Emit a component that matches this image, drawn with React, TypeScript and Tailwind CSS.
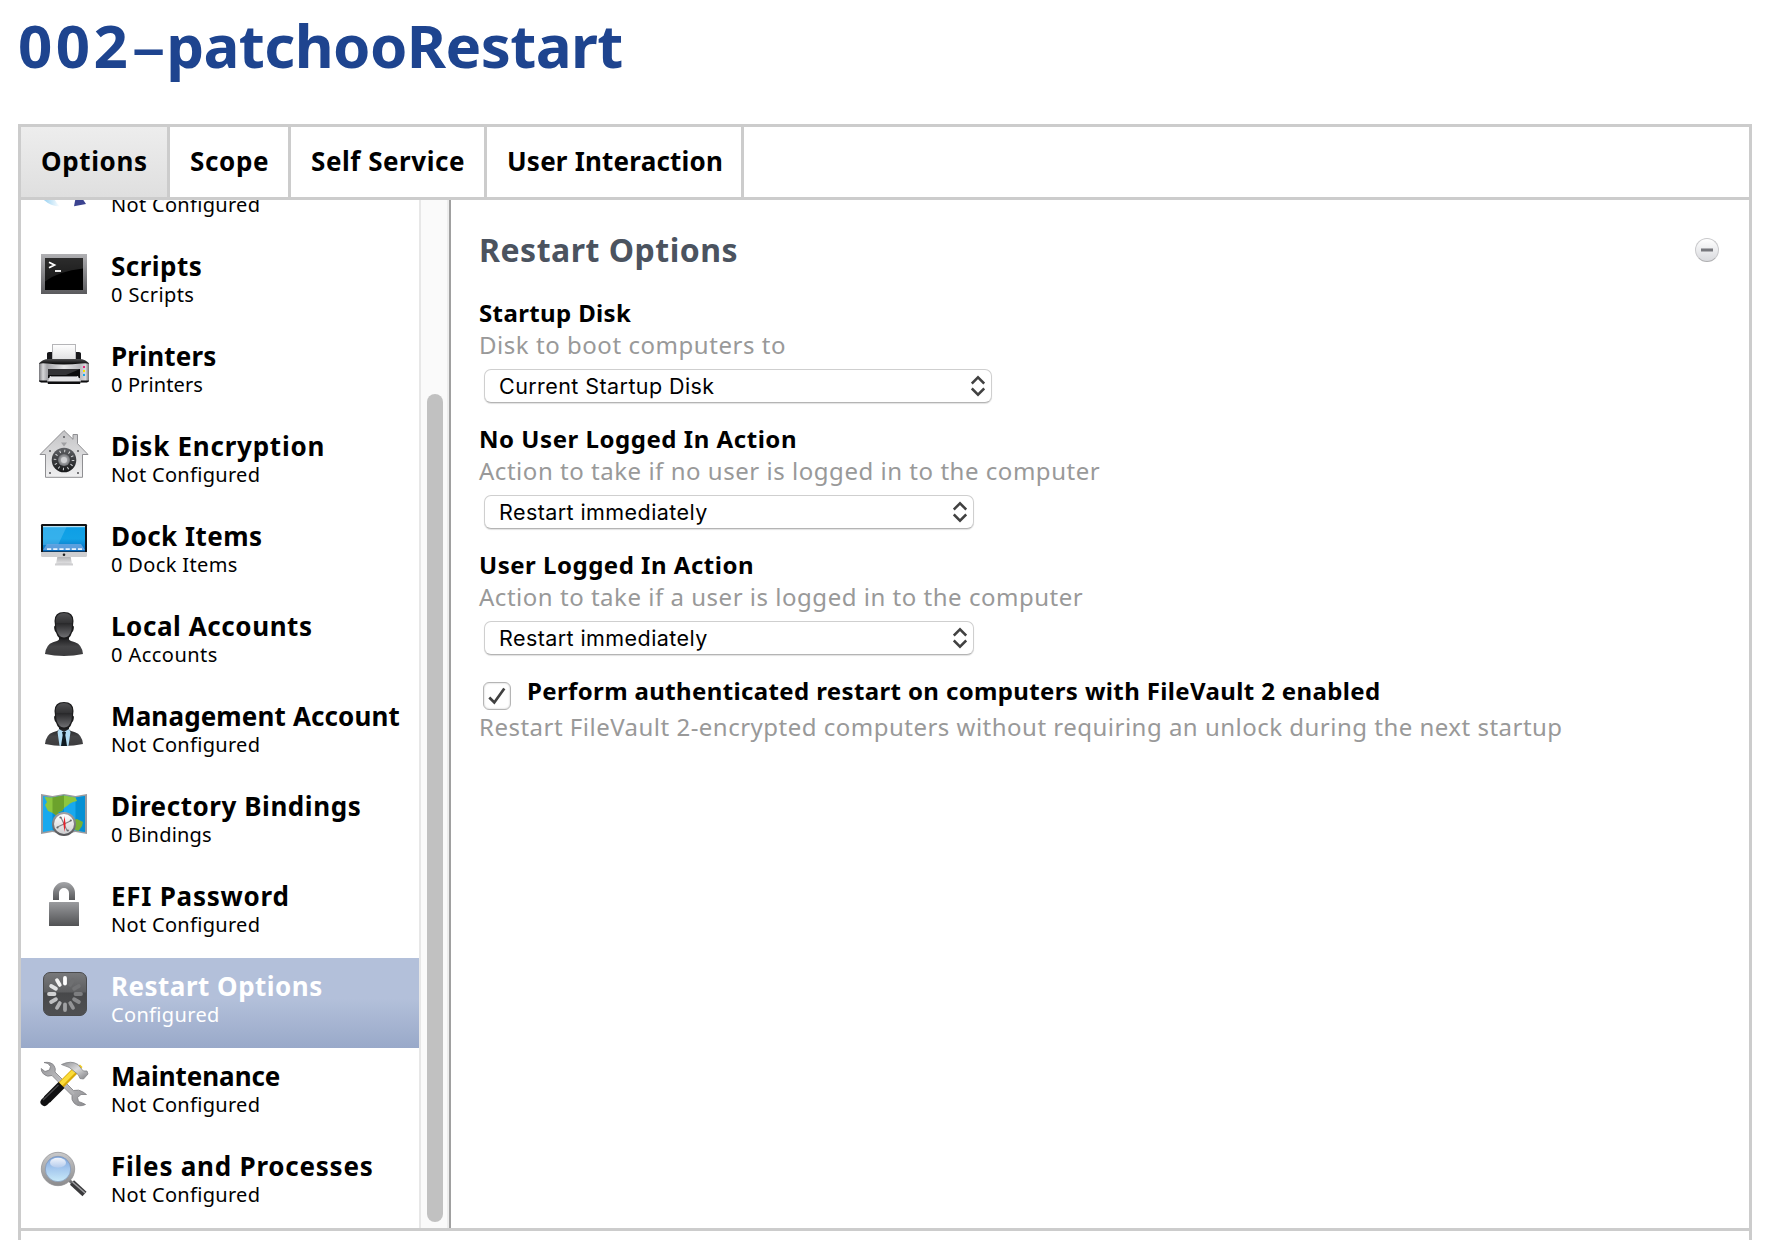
import React from "react";

function Icon({ children }: { children: React.ReactNode }) {
  return (
    <svg viewBox="0 0 50 50" className="mt-[10px] ml-[18px] h-[50px] w-[50px] shrink-0">
      {children}
    </svg>
  );
}

function PackageIcon() {
  return (
    <Icon>
      <defs>
        <linearGradient id="pkgBlue" x1="0" x2="1" y1="0" y2="0">
          <stop offset="0" stopColor="#8fcdf0" />
          <stop offset="1" stopColor="#ffffff" />
        </linearGradient>
      </defs>
      <path d="M3 40 Q10 48 21 48.5 Q17 45 15 40Z" fill="url(#pkgBlue)" />
      <path d="M37 38 L35 48.3 L47 46 L43 40Z" fill="#3b4390" />
    </Icon>
  );
}

function ScriptsIcon() {
  return (
    <Icon>
      <defs>
        <linearGradient id="scFrame" x1="0" x2="0" y1="0" y2="1">
          <stop offset="0" stopColor="#b0b0b3" />
          <stop offset="1" stopColor="#5a5a5d" />
        </linearGradient>
        <linearGradient id="scShine" x1="0" x2="0" y1="0" y2="1">
          <stop offset="0" stopColor="#2c2c2c" />
          <stop offset="1" stopColor="#1a1a1a" />
        </linearGradient>
      </defs>
      <rect x="2" y="6" width="46" height="40" fill="url(#scFrame)" />
      <rect x="6" y="10" width="38" height="32" fill="#000" />
      <path d="M6 10H44V20.500Q20 23 6 33.500Z" fill="url(#scShine)" />
      <path d="M10 14.200 L15.500 17 L10 19.800" fill="none" stroke="#fff" strokeWidth="1.800" />
      <path d="M16 23H22" stroke="#fff" strokeWidth="1.800" />
    </Icon>
  );
}

function PrinterIcon() {
  return (
    <Icon>
      <defs>
        <linearGradient id="prBody" x1="0" x2="1" y1="0" y2="0">
          <stop offset="0" stopColor="#77777b" />
          <stop offset=".08" stopColor="#d6d6d8" />
          <stop offset=".16" stopColor="#a5a5a9" />
          <stop offset=".5" stopColor="#e6e6e8" />
          <stop offset=".82" stopColor="#b9b9bd" />
          <stop offset=".93" stopColor="#d9d9dc" />
          <stop offset="1" stopColor="#747478" />
        </linearGradient>
        <linearGradient id="prPaper" x1="0" x2="0" y1="0" y2="1">
          <stop offset="0" stopColor="#ffffff" />
          <stop offset="1" stopColor="#dcdcde" />
        </linearGradient>
        <linearGradient id="prTop" x1="0" x2="0" y1="0" y2="1">
          <stop offset="0" stopColor="#4c4c4e" />
          <stop offset="1" stopColor="#050505" />
        </linearGradient>
      </defs>
      <path d="M8 22V15.500Q8 14 10 14H13V22ZM37 22V14H40Q42 14 42 15.500V22Z" fill="#17171a" />
      <rect x="13.500" y="6.500" width="23" height="17" fill="url(#prPaper)" stroke="#b5b5b8" />
      <path d="M0 25Q1 24 3 24H47Q49 24 50 25V43Q49 44.500 46 44.500H4Q1 44.500 0 43Z" fill="url(#prBody)" />
      <path d="M0 26Q3 21 10 21H40Q47 21 50 26Q48 24.700 42 25.500Q25 27.500 8 25.500Q2 24.700 0 26Z" fill="url(#prTop)" />
      <path d="M9 31H41V40H9Z" fill="#0b0b0c" />
      <path d="M9 31H41L27 37H9Z" fill="#333336" />
      <path d="M11 38H39L41 43.500H9Z" fill="#e4e4e6" />
      <path d="M12 38H38L38.500 39H11.500Z" fill="#8a8a8e" />
      <path d="M0 42.500H8V44.500H4Q0 44.500 0 42.500ZM42 42.500H50Q50 44.500 46 44.500H42ZM8 43.500H42L41 46H9Z" fill="#0d0d0e" />
      <rect x="44" y="28" width="2" height="2" fill="#e6267c" />
      <rect x="44" y="32" width="2" height="2" fill="#f5e400" />
      <rect x="44" y="36" width="2" height="2" fill="#16a7e8" />
    </Icon>
  );
}

function VaultIcon() {
  return (
    <Icon>
      <defs>
        <linearGradient id="vaHouse" x1="0" x2="0" y1="0" y2="1">
          <stop offset="0" stopColor="#c3c3c5" />
          <stop offset="1" stopColor="#f0f0f1" />
        </linearGradient>
        <radialGradient id="vaKnob">
          <stop offset="0" stopColor="#d9d9dc" />
          <stop offset="1" stopColor="#707276" />
        </radialGradient>
        <linearGradient id="vaDial" x1="0" x2="0" y1="0" y2="1">
          <stop offset="0" stopColor="#606266" />
          <stop offset="1" stopColor="#17181a" />
        </linearGradient>
      </defs>
      <path d="M25 2.500 L34 11.300V6.500H38.500V15.700L49 26.500H43.500V49.300H6.500V26.500H1Z" fill="url(#vaHouse)" stroke="#8f8f92" strokeWidth="1" />
      <path d="M22 14.500H28L25 18.500Z" fill="#a0a0a3" />
      <rect x="24" y="8" width="2" height="2" fill="#77777a" />
      <g fill="#77777a">
        <rect x="10" y="22" width="2" height="2" />
        <rect x="38" y="22" width="2" height="2" />
        <rect x="10" y="44" width="2" height="2" />
        <rect x="38" y="44" width="2" height="2" />
      </g>
      <circle cx="25" cy="32" r="12.300" fill="url(#vaDial)" />
      <circle cx="25" cy="32" r="9" fill="none" stroke="#d9dadc" strokeWidth="2.600" strokeDasharray="1 3.712" />
      <circle cx="25" cy="32" r="6" fill="url(#vaKnob)" />
      <circle cx="25" cy="32" r="3" fill="#cfd0d3" />
    </Icon>
  );
}

function DisplayIcon() {
  return (
    <Icon>
      <defs>
        <linearGradient id="diScreen" x1="0" x2="0" y1="0" y2="1">
          <stop offset="0" stopColor="#0d9ee6" />
          <stop offset=".5" stopColor="#12a2e6" />
          <stop offset="1" stopColor="#0a69bd" />
        </linearGradient>
        <linearGradient id="diStand" x1="0" x2="0" y1="0" y2="1">
          <stop offset="0" stopColor="#a9a9ac" />
          <stop offset="1" stopColor="#e6e6e7" />
        </linearGradient>
      </defs>
      <path d="M18.500 38H31.500L33 46H17Z" fill="url(#diStand)" />
      <path d="M16 45.500Q25 44 34 45.500V47.500H16Z" fill="#cfcfd1" />
      <rect x="2" y="6" width="46" height="29" rx="1.200" fill="#111214" />
      <path d="M2 34H48V37.500Q48 39 46.500 39H3.500Q2 39 2 37.500Z" fill="#cfcfd1" />
      <rect x="4" y="8" width="42" height="25.500" fill="url(#diScreen)" />
      <path d="M4 8H28L19 27H4Z" fill="#6cc8f5" opacity=".4" />
      <rect x="4" y="8" width="42" height="1.200" fill="#b9dff0" />
      <path d="M8 26H42L46 32H4Z" fill="#6aa5e0" opacity=".85" />
      <path d="M8 31.200H43" stroke="#e8f4ff" strokeWidth="1.800" strokeDasharray="4.200 2" />
      <circle cx="25" cy="36.700" r="1.300" fill="#222" />
    </Icon>
  );
}

function PersonIcon({ suit = false }: { suit?: boolean }) {
  return (
    <Icon>
      <defs>
        <linearGradient id="peHead" x1="0" x2="0" y1="0" y2="1">
          <stop offset="0" stopColor="#515153" />
          <stop offset=".4" stopColor="#333335" />
          <stop offset=".43" stopColor="#29292b" />
          <stop offset="1" stopColor="#6f6f72" />
        </linearGradient>
        <linearGradient id="peBody" x1="0" x2="0" y1="0" y2="1">
          <stop offset="0" stopColor="#111112" />
          <stop offset=".55" stopColor="#454547" />
          <stop offset="1" stopColor="#3c3c3e" />
        </linearGradient>
      </defs>
      <path d="M20 27H30V31.500Q31 33 36 34.200Q43 36.500 44 46Q35 48 25 48T6 46Q7 36.500 14 34.200Q19 33 20 31.500Z" fill="url(#peBody)" />
      {suit && (
        <g>
          <path d="M20 31L25 34L30 31L31.500 34L29.500 47.700Q25 48.200 20.500 47.700L18.500 34Z" fill="#b2dcf3" />
          <path d="M23 34H27L26.300 37L28 47.900H22L23.700 37Z" fill="#0e1a20" />
        </g>
      )}
      <path d="M25 4Q34.500 4 34.500 13L34 17.500Q35.500 18 34.700 21Q34.200 24 33 24.500Q31 31.500 25 31.500Q19 31.500 17 24.500Q15.800 24 15.300 21Q14.500 18 16 17.500L15.500 13Q15.500 4 25 4Z" fill="#1b1b1c" />
      <path d="M25 5Q33 5 33.300 13L32.500 22Q30.500 29.500 25 29.500T17.500 22L16.700 13Q17 5 25 5Z" fill="url(#peHead)" />
    </Icon>
  );
}

function MapIcon() {
  return (
    <Icon>
      <defs>
        <linearGradient id="maFace" x1="0" x2="0" y1="0" y2="1">
          <stop offset="0" stopColor="#ffffff" />
          <stop offset="1" stopColor="#cfcfd1" />
        </linearGradient>
        <linearGradient id="maRim" x1="0" x2="0" y1="0" y2="1">
          <stop offset="0" stopColor="#a3a3a6" />
          <stop offset="1" stopColor="#545457" />
        </linearGradient>
      </defs>
      <path d="M2 6L13.500 8L25 6L36.500 8L48 6V46L36.500 44L25 46L13.500 44L2 46Z" fill="#9a9b9f" />
      <path d="M4 8L13.500 9.600L25 7.600L36.500 9.600L46 8V44L36.500 42.300L25 44L13.500 42.300L4 44Z" fill="#18a9ee" />
      <path d="M13.500 9.600L25 7.600V44L13.500 42.300ZM36.500 9.600L46 8V44L36.500 42.300Z" fill="#0590d4" />
      <path d="M5.500 9L13.500 9.600L25 7.600L36.500 9.600L38 13L34 14L31 15.500L28 18L25 20L23 23L19 24L21 27L18 28L14 25L9 23L6 17L8 14Z" fill="#8cc63e" />
      <path d="M13.500 9.600L25 7.600V20L23 23L19 24L21 27L18 28L13.500 24.700Z" fill="#6ca22c" />
      <path d="M34 32L38 31L44 34L43 38L39.500 42.900L36 42Z" fill="#78b034" />
      <circle cx="25" cy="36" r="12" fill="url(#maRim)" />
      <circle cx="25" cy="36" r="10" fill="url(#maFace)" />
      <g stroke="#808084" strokeWidth="1.100">
        <path d="M18.500 39L31.500 33M22 29.500L28 42.500" />
      </g>
      <g fill="#67676b">
        <circle cx="21.500" cy="29.500" r="1.100" />
        <circle cx="31.800" cy="32.500" r="1.100" />
        <circle cx="18.500" cy="39.500" r="1.100" />
        <circle cx="28.800" cy="42.500" r="1.100" />
      </g>
      <path d="M25.500 28L26.600 36L25.500 44L24.400 36Z" fill="#e8212b" />
    </Icon>
  );
}

function LockIcon() {
  return (
    <Icon>
      <defs>
        <linearGradient id="loBody" x1="0" x2="0" y1="0" y2="1">
          <stop offset="0" stopColor="#9a9b9e" />
          <stop offset="1" stopColor="#515254" />
        </linearGradient>
        <linearGradient id="loShackle" x1="0" x2="0" y1="0" y2="1">
          <stop offset="0" stopColor="#a5a6a9" />
          <stop offset="1" stopColor="#58595b" />
        </linearGradient>
      </defs>
      <path d="M14 22V15A11 11 0 0 1 36 15V22H30V15A5 5 0 0 0 20 15V22Z" fill="url(#loShackle)" />
      <rect x="10" y="24" width="30" height="24" rx=".6" fill="url(#loBody)" />
    </Icon>
  );
}

const spokes = [
  "#ffffff", "#6e6f71", "#727375", "#7d7e80", "#88898b", "#939496",
  "#a0a1a3", "#b0b1b3", "#bfc0c2", "#d0d1d2", "#e2e3e4", "#f2f2f2",
];

function RestartIcon() {
  return (
    <Icon>
      <defs>
        <linearGradient id="reBase" x1="0" x2="0" y1="0" y2="1">
          <stop offset="0" stopColor="#78797b" />
          <stop offset=".46" stopColor="#5d5e60" />
          <stop offset=".47" stopColor="#47484a" />
          <stop offset="1" stopColor="#4f5052" />
        </linearGradient>
      </defs>
      <rect x="4.500" y="4.500" width="43" height="43" rx="6.500" fill="url(#reBase)" stroke="#4a4b4d" />
      {spokes.map((color, i) => (
        <path key={i} d="M26 10V15.500" stroke={color} strokeWidth="3.800" strokeLinecap="round" transform={`rotate(${i * 30} 26 26)`} />
      ))}
    </Icon>
  );
}

function ToolsIcon() {
  return (
    <Icon>
      <defs>
        <linearGradient id="toSteel" x1="0" x2="1" y1="0" y2="1">
          <stop offset="0" stopColor="#8f8f92" />
          <stop offset=".45" stopColor="#c6c6c9" />
          <stop offset="1" stopColor="#8b8b8e" />
        </linearGradient>
        <linearGradient id="toHead" x1="0" x2="1" y1="0" y2="1">
          <stop offset="0" stopColor="#8d8e91" />
          <stop offset=".5" stopColor="#dadadc" />
          <stop offset="1" stopColor="#7e7f82" />
        </linearGradient>
      </defs>
      <path
        d="M5 4.500Q12 3.500 15 7.500Q17 10.500 16 14L34.500 32.500Q40 31 44 34L47.500 36.500L42 36.500L38.500 39.500L39.500 43.500L43.500 45L46.500 46.500Q40 49.500 35.500 45.500Q32 42 33 37.500L13 17.500Q8 19.500 4.500 16Q2 13.500 2.200 10.500L6 13.500L10.500 12L11.500 8.500L9 5.500Z"
        fill="url(#toSteel)"
        stroke="#7e7e81"
        strokeWidth=".8"
      />
      <path d="M15 16L35 36" stroke="#b4b4b7" strokeWidth="1.200" />
      <path d="M39.500 9.500L21.500 27.500" stroke="#d9aa08" strokeWidth="7" />
      <path d="M38.500 9.500L20.500 27.500" stroke="#fbdc3a" strokeWidth="4" />
      <path d="M39 8L41 6.500L43.500 9L42 11Z" fill="#f1cc21" />
      <path d="M22.500 27L8 41.500" stroke="#101011" strokeWidth="8.500" />
      <path d="M8 41.500L5.500 44" stroke="#101011" strokeWidth="8" strokeLinecap="round" />
      <path d="M19.500 27L4 42" stroke="#48484a" strokeWidth="1.300" />
      <path
        d="M22.500 6.500Q32 2 39 6.500L43 11.500L44.500 13L48 13L49 16L44.500 21L41 20.500L39.500 17L36 14Q31 8.500 22.500 6.500Z"
        fill="url(#toHead)"
        stroke="#828386"
        strokeWidth=".8"
      />
    </Icon>
  );
}

function MagnifierIcon() {
  return (
    <Icon>
      <defs>
        <linearGradient id="mgRim" x1="0" x2="0" y1="0" y2="1">
          <stop offset="0" stopColor="#c9c9ca" />
          <stop offset="1" stopColor="#8b8b8d" />
        </linearGradient>
        <linearGradient id="mgGlass" x1="0" x2="0" y1="0" y2="1">
          <stop offset="0" stopColor="#7ba3dc" />
          <stop offset=".5" stopColor="#a5c8ee" />
          <stop offset="1" stopColor="#c9eaf9" />
        </linearGradient>
        <linearGradient id="mgShine" x1="0" x2="0" y1="0" y2="1">
          <stop offset="0" stopColor="#f1f5fc" />
          <stop offset="1" stopColor="#b4cbec" />
        </linearGradient>
      </defs>
      <path d="M29 31L34 36" stroke="#707173" strokeWidth="3" />
      <path d="M33 34.500L45.500 46" stroke="#3a3a3c" strokeWidth="6" />
      <path d="M33.500 34L46 45" stroke="#a1a1a4" strokeWidth="1.500" />
      <circle cx="19" cy="21" r="16.700" fill="url(#mgRim)" stroke="#8e8e90" strokeWidth=".7" />
      <circle cx="19" cy="21" r="12.700" fill="url(#mgGlass)" stroke="#8093b3" strokeWidth=".7" />
      <ellipse cx="19" cy="14.700" rx="8" ry="5" fill="url(#mgShine)" />
    </Icon>
  );
}

type Item = {
  title: string;
  tracking: string;
  status: string;
  statusTracking: string;
  icon: React.ReactNode;
  selected?: boolean;
};

const items: Item[] = [
  { title: "Packages", tracking: "tracking-[0.5px]", status: "Not Configured", statusTracking: "tracking-[0.31px]", icon: <PackageIcon /> },
  { title: "Scripts", tracking: "tracking-[0.47px]", status: "0 Scripts", statusTracking: "tracking-[0.4px]", icon: <ScriptsIcon /> },
  { title: "Printers", tracking: "tracking-[0.2px]", status: "0 Printers", statusTracking: "tracking-[0.12px]", icon: <PrinterIcon /> },
  { title: "Disk Encryption", tracking: "tracking-[0.76px]", status: "Not Configured", statusTracking: "tracking-[0.31px]", icon: <VaultIcon /> },
  { title: "Dock Items", tracking: "tracking-[0.46px]", status: "0 Dock Items", statusTracking: "tracking-[0.36px]", icon: <DisplayIcon /> },
  { title: "Local Accounts", tracking: "tracking-[0.58px]", status: "0 Accounts", statusTracking: "tracking-[0.45px]", icon: <PersonIcon /> },
  { title: "Management Account", tracking: "tracking-[0.14px]", status: "Not Configured", statusTracking: "tracking-[0.31px]", icon: <PersonIcon suit /> },
  { title: "Directory Bindings", tracking: "tracking-[0.56px]", status: "0 Bindings", statusTracking: "tracking-[0.2px]", icon: <MapIcon /> },
  { title: "EFI Password", tracking: "tracking-[0.75px]", status: "Not Configured", statusTracking: "tracking-[0.31px]", icon: <LockIcon /> },
  { title: "Restart Options", tracking: "tracking-[0.49px]", status: "Configured", statusTracking: "tracking-[0.34px]", icon: <RestartIcon />, selected: true },
  { title: "Maintenance", tracking: "tracking-[-0.05px]", status: "Not Configured", statusTracking: "tracking-[0.31px]", icon: <ToolsIcon /> },
  { title: "Files and Processes", tracking: "tracking-[0.77px]", status: "Not Configured", statusTracking: "tracking-[0.31px]", icon: <MagnifierIcon /> },
];

const tabs = [
  { label: "Options", size: "w-[149px] tracking-[0.63px]", active: true },
  { label: "Scope", size: "w-[121px] tracking-[0.64px]" },
  { label: "Self Service", size: "w-[196px] tracking-[0.55px]" },
  { label: "User Interaction", size: "w-[257px] tracking-[0.21px]" },
];

function SidebarRow({ item }: { item: Item }) {
  return (
    <li
      className={
        item.selected
          ? "flex h-[90px] bg-linear-to-b from-[#b3c0da] from-45% to-[#99a9c9] text-white"
          : "flex h-[90px] text-black"
      }
    >
      {item.icon}
      <div className="ml-[22px] pt-[13px] whitespace-nowrap">
        <div className={`text-[26px] leading-[30px] font-bold ${item.tracking}`}>{item.title}</div>
        <div className={`mt-px text-[20px] leading-[26px] ${item.statusTracking}`}>{item.status}</div>
      </div>
    </li>
  );
}

function Select({ value, className }: { value: string; className: string }) {
  return (
    <button
      className={`mt-2 ml-[5px] flex h-[34px] items-center justify-between rounded-[7px] border border-[#cfcfcf] border-b-[#b4b4b4] bg-white pr-[6px] pl-[14px] font-['Inter',sans-serif] text-[21.5px] shadow-[0_1px_1px_rgba(0,0,0,0.12)] ${className}`}
    >
      {value}
      <svg viewBox="0 0 14 22" className="h-[22px] w-[14px]" fill="none" stroke="#414141" strokeWidth="2.500">
        <path d="M.800 8.500L7 2.300L13.200 8.500M.800 13.500L7 19.700L13.200 13.500" />
      </svg>
    </button>
  );
}

type FieldProps = {
  label: string;
  labelTracking: string;
  hint: string;
  hintTracking: string;
  value: string;
  selectClass: string;
};

function Field({ label, labelTracking, hint, hintTracking, value, selectClass }: FieldProps) {
  return (
    <div className="mb-5">
      <div className={`text-[24px] leading-8 font-bold ${labelTracking}`}>{label}</div>
      <div className={`text-[24px] leading-8 text-[#999] ${hintTracking}`}>{hint}</div>
      <Select value={value} className={selectClass} />
    </div>
  );
}

export default function App() {
  return (
    <div className="flex h-[1240px] w-[1768px] flex-col overflow-hidden bg-white font-['Noto_Sans',sans-serif] text-black">
      <h1 className="flex h-[124px] pt-[5px] pl-[18px] text-[60px] leading-[80px] font-bold whitespace-nowrap text-[#1e448f]">
        <span className="tracking-[3.4px]">002</span>
        <span className="w-[35px] text-center">
          <span className="inline-block scale-x-190 font-medium">-</span>
        </span>
        <span className="tracking-[-0.6px]">patchooRestart</span>
      </h1>
      <div className="mr-4 ml-[18px] flex flex-1 flex-col border-x-3 border-t-3 border-[#ccc]">
        <nav className="flex h-[73px] border-b-3 border-[#ccc]">
          {tabs.map((tab) => (
            <div
              key={tab.label}
              className={`flex items-center border-r-3 border-[#ccc] pb-[2px] pl-5 text-[26px] font-bold whitespace-nowrap ${tab.size} ${tab.active ? "bg-linear-to-b from-[#ededed] to-[#dfdfdf]" : ""}`}
            >
              {tab.label}
            </div>
          ))}
        </nav>
        <div className="flex h-[1031px] border-b-3 border-[#ccc]">
          <aside className="flex w-[430px] shrink-0 border-r-2 border-[#a0a0a0]">
            <div className="h-[1028px] w-[398px] overflow-hidden">
              <ul className="-mt-[52px]">
                {items.map((item) => (
                  <SidebarRow key={item.title} item={item} />
                ))}
              </ul>
            </div>
            <div className="flex-1 border-r-2 border-l-2 border-r-[#ededed] border-l-[#e7e7e7] bg-[#fafafa] pt-[194px] pl-[6px]">
              <div className="h-[828px] w-4 rounded-full bg-[#c1c1c1]" />
            </div>
          </aside>
          <main className="flex-1 pt-[30px] pr-[30px] pl-7 whitespace-nowrap">
            <div className="mb-[27px] flex h-10 items-center justify-between">
              <h2 className="text-[32px] leading-10 font-bold tracking-[0.5px] text-[#4b535f]">Restart Options</h2>
              <button className="flex h-6 w-6 items-center justify-center rounded-full border border-[#c9c9cb] border-b-[#aeaeb0] bg-linear-to-b from-white to-[#d9dade]">
                <span className="h-1 w-3 border-y border-[#b0b0b4] bg-[#77787d]" />
              </button>
            </div>
            <Field
              label="Startup Disk"
              labelTracking="tracking-[0.37px]"
              hint="Disk to boot computers to"
              hintTracking="tracking-[0.54px]"
              value="Current Startup Disk"
              selectClass="w-[508px] tracking-[0.42px]"
            />
            <Field
              label="No User Logged In Action"
              labelTracking="tracking-[0.54px]"
              hint="Action to take if no user is logged in to the computer"
              hintTracking="tracking-[0.53px]"
              value="Restart immediately"
              selectClass="w-[490px] tracking-[0.42px]"
            />
            <Field
              label="User Logged In Action"
              labelTracking="tracking-[0.51px]"
              hint="Action to take if a user is logged in to the computer"
              hintTracking="tracking-[0.52px]"
              value="Restart immediately"
              selectClass="w-[490px] tracking-[0.42px]"
            />
            <div className="flex h-9 items-start">
              <span className="mt-[7px] ml-1 flex h-7 w-7 items-center justify-center rounded-[6px] border border-[#b5b5b5] bg-white shadow-[inset_0_0_2px_rgba(0,0,0,0.25)]">
                <svg viewBox="0 0 28 28" className="h-7 w-7 shrink-0" fill="none" stroke="#414141" strokeWidth="2.700">
                  <path d="M6.300 15.500L11.300 20.500L21.300 6.500" />
                </svg>
              </span>
              <span className="ml-4 text-[24px] leading-8 font-bold tracking-[0.37px]">
                Perform authenticated restart on computers with FileVault 2 enabled
              </span>
            </div>
            <div className="text-[24px] leading-8 tracking-[0.49px] text-[#999]">
              Restart FileVault 2-encrypted computers without requiring an unlock during the next startup
            </div>
          </main>
        </div>
      </div>
    </div>
  );
}
